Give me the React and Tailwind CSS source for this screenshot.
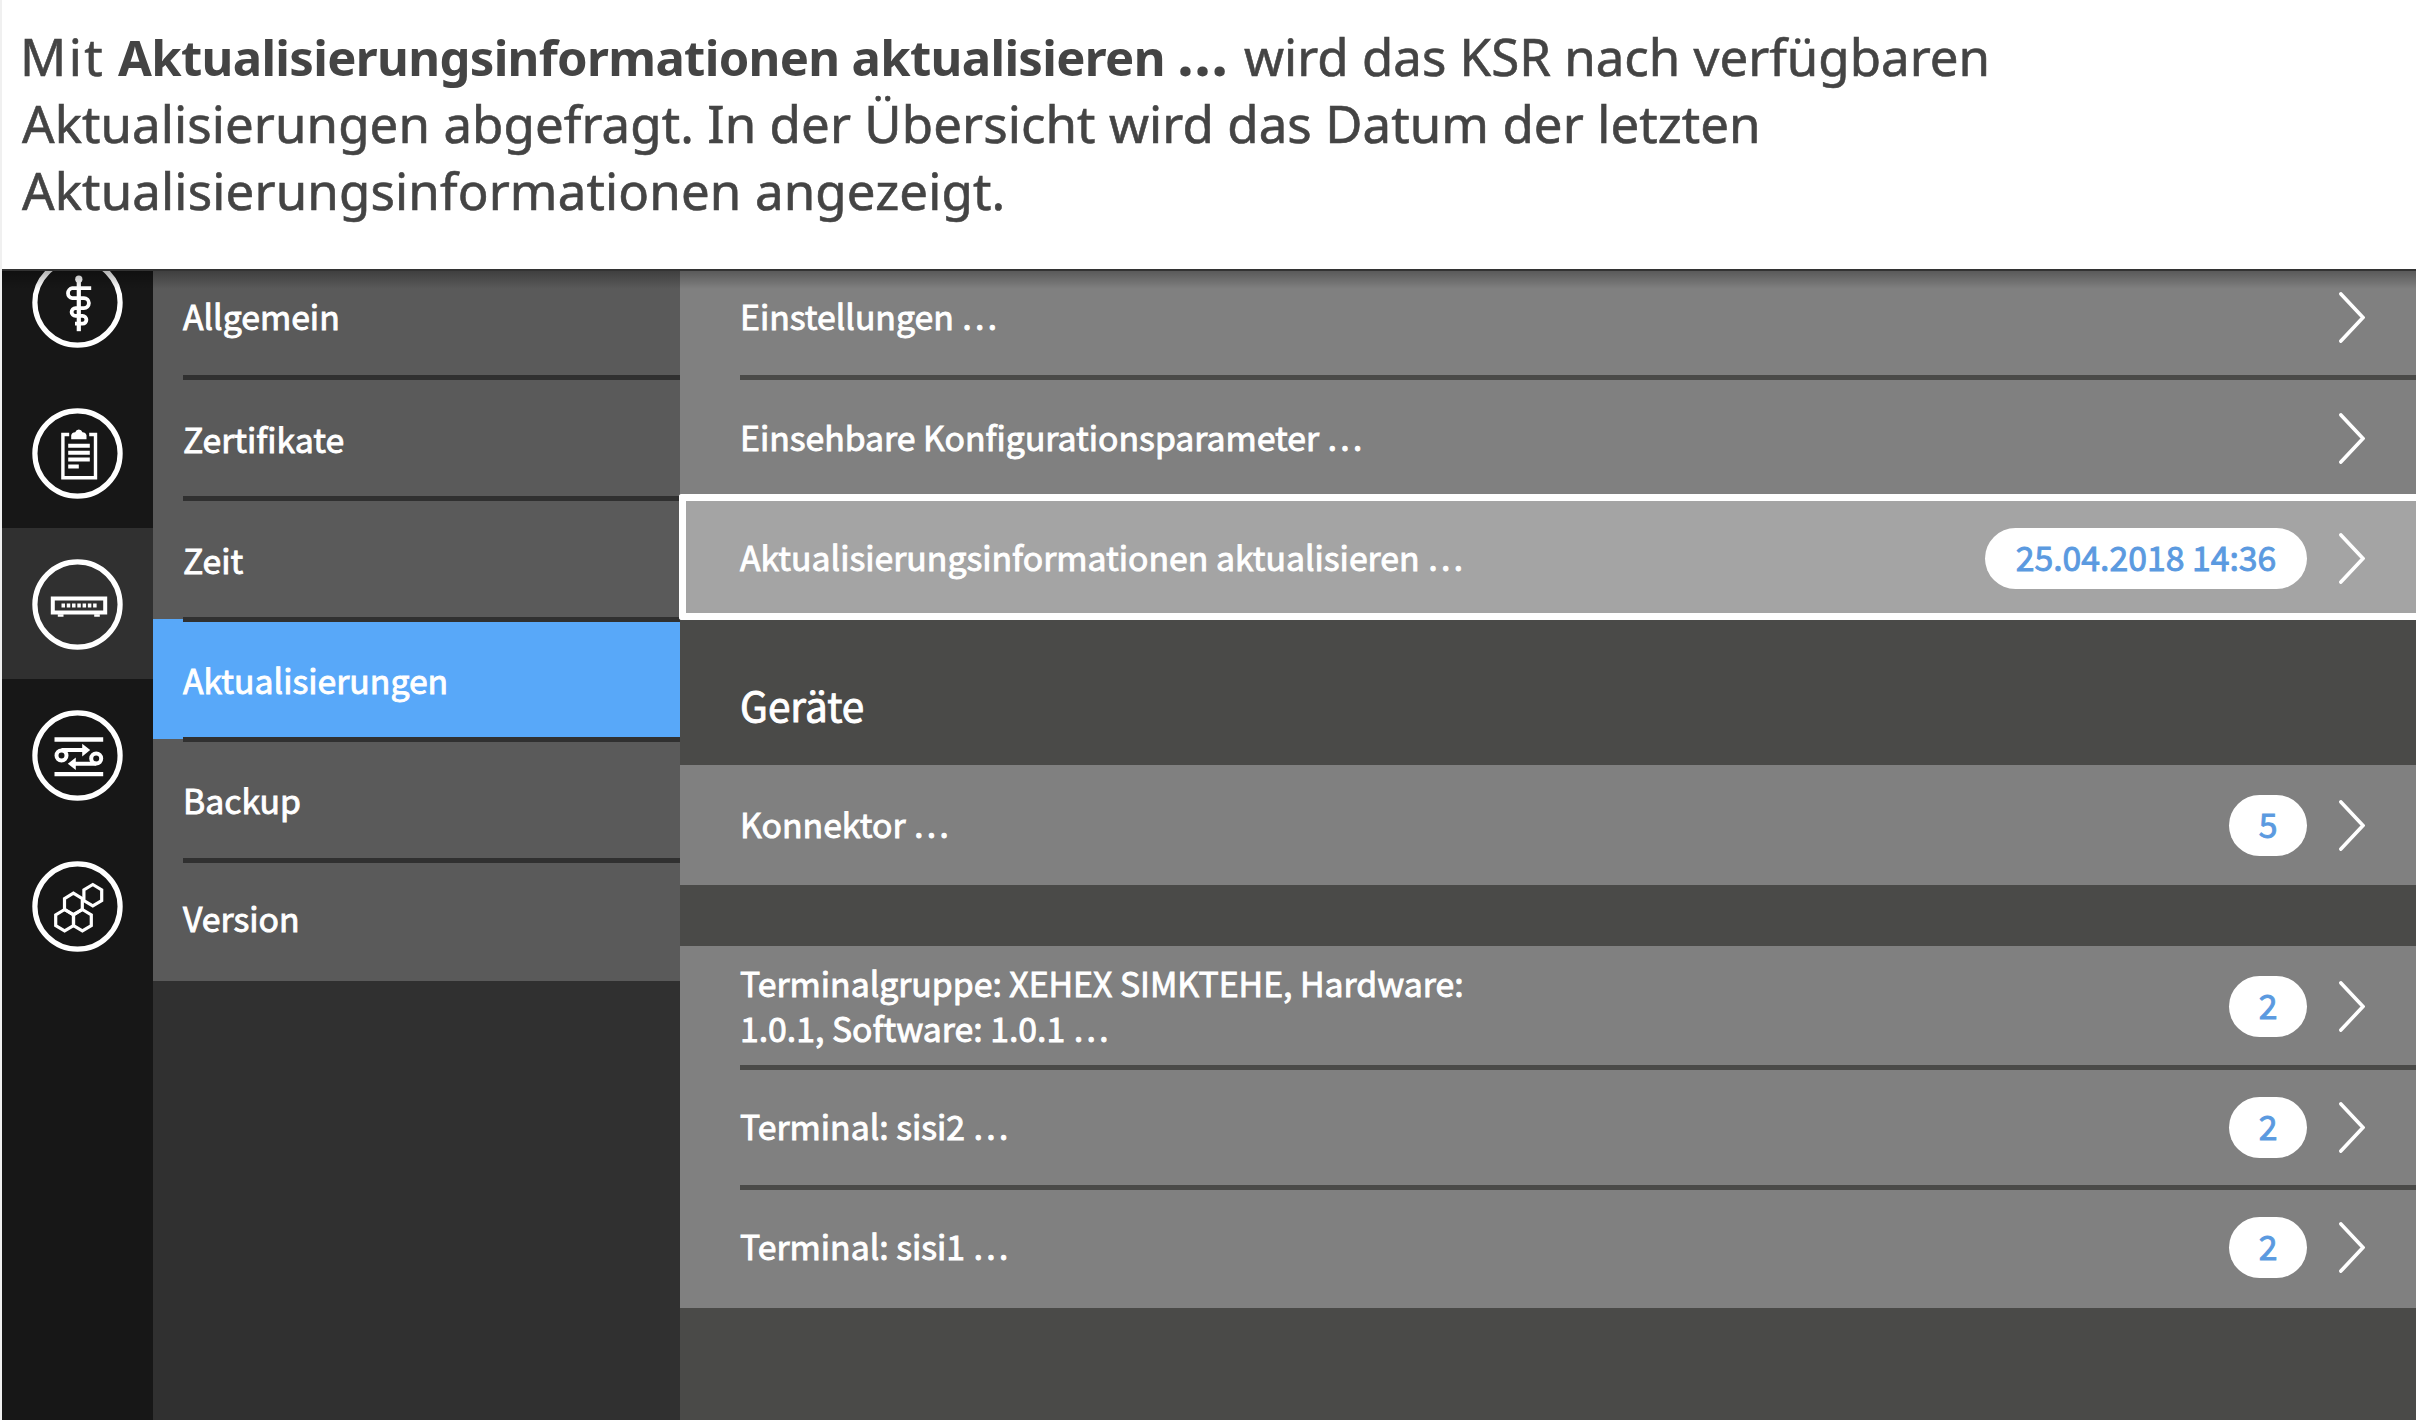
import React from "react";

const LINE = { fill: "none", stroke: "white" };

function RodIcon() {
  return (
    <g {...LINE} strokeWidth="3.8">
      <circle cx="1.3" cy="-23.3" r="3.6" fill="white" stroke="none" />
      <path d="M1.3 -24V28.7" strokeWidth="4.2" />
      <path d="M13.7 -14.3H-5.2A5 5 0 0 0 -5.2 -4.4H6.4A5 5 0 0 1 6.4 5.6H-2A3.9 3.9 0 0 0 -2 13.4H5A3.9 3.9 0 0 1 5 21.2H-2.5" />
    </g>
  );
}

function ClipboardIcon() {
  return (
    <g {...LINE} strokeWidth="3.4">
      <path d="M-8.3 -19H-14.6V24.3H18V-19H11.7" />
      <path d="M-6.3 -14.2V-18.3Q-5.6 -21.3 -2.3 -21.3Q-1.3 -24 1.3 -24Q4 -24 5 -21.3Q8.2 -21.3 9 -18.3V-14.2Z" fill="white" stroke="none" />
      <path d="M-9.3 -7.7H12.3M-9.3 -.8H12.3M-9.3 6.1H12.3M-9.3 13H1.3" strokeWidth="4" />
    </g>
  );
}

function ConnectorIcon() {
  return (
    <g {...LINE} strokeWidth="4">
      <rect x="-24.7" y="-6" width="52.4" height="14" />
      <path d="M-16 1H19.2" strokeWidth="4.2" strokeDasharray="3.5 1.77" />
      <path d="M-19.7 11H-14M16.7 11H22.3" strokeWidth="2.6" />
    </g>
  );
}

function ExchangeIcon() {
  return (
    <g {...LINE} strokeWidth="4">
      <path d="M-23 -16H25.7M-23 18.7H25.7" strokeWidth="4.3" />
      <circle cx="-16" cy="0" r="5" />
      <circle cx="18.7" cy="3" r="5" />
      <path d="M-16 -5.4H6M18.7 8.3H-3" />
      <path d="M4.7 -11.8L12.7 -5.4L4.7 1ZM-1.7 2L-9.7 8.3L-1.7 14.6Z" fill="white" stroke="none" />
    </g>
  );
}

function HexIcon() {
  const hex = "m0 -10.7l8.9 5.35v10.7l-8.9 5.35l-8.9 -5.35v-10.7z";
  return (
    <g {...LINE} strokeWidth="3.2">
      <path d={"M15.3 -11.3" + hex} />
      <path d={"M-4.1 -2.6" + hex} />
      <path d={"M-12.9 13.7" + hex} />
      <path d={"M4.9 13.7" + hex} />
    </g>
  );
}

function RailItem({ children, className }) {
  return (
    <div className={`flex shrink-0 justify-center ${className}`}>
      <svg className="h-[91px] w-[91px] shrink-0" viewBox="-45.5 -45.5 91 91">
        <circle r="42.6" fill="none" stroke="white" strokeWidth="5.2" />
        {children}
      </svg>
    </div>
  );
}

function MenuItem({ label, className, last }) {
  return (
    <div className={`relative flex shrink-0 items-center pl-[30px] ${className}`}>
      <span>{label}</span>
      {!last && <div className="absolute right-0 -bottom-[3px] left-[30px] z-10 h-[5px] bg-[#303030]" />}
    </div>
  );
}

function Row({ label, value, className, divider }) {
  const pillSize = value && value.length > 1 ? "w-[322px]" : "w-[78px]";
  return (
    <div className={`relative flex shrink-0 items-center pr-[51px] ${className}`}>
      <span className="max-w-[760px] pb-[3px] leading-[45.5px]">{label}</span>
      <span className="flex-1" />
      {value && (
        <span className={`mr-[32px] flex h-[61px] items-center justify-center rounded-full bg-white pb-[2px] text-[#5b9ae0] ${pillSize}`}>
          {value}
        </span>
      )}
      <svg className="h-[51px] w-[26px] shrink-0" viewBox="0 0 26 51">
        <path d="M1.9 1.9L24 25.5L1.9 49.1" fill="none" stroke="white" strokeWidth="3.6" strokeLinecap="round" />
      </svg>
      {divider && <div className="absolute right-0 -bottom-[3px] left-[60px] z-10 h-[5px] bg-[#4a4a48]" />}
    </div>
  );
}

export default function App() {
  return (
    <div className="flex h-[1420px] w-[2416px] overflow-hidden bg-white">
      <div className="w-[2px] shrink-0 bg-[#f0f0f0]" />
      <div className="flex min-w-0 flex-1 flex-col">
        <div className="h-[271px] shrink-0 border-b-2 border-[#333333] pt-[23px] pl-5 font-['Noto_Sans',sans-serif] text-[51px] leading-[67px] whitespace-nowrap text-[#444444] [-webkit-text-stroke:0.6px_currentColor]">
          <div className="flex h-[67px]">
            <span className="-ml-[2px] w-[98px] tracking-[2.4px]">Mit</span>
            <strong className="w-[1126px] text-[49px] font-bold tracking-[-0.67px] [-webkit-text-stroke:0px]">
              Aktualisierungsinformationen aktualisieren <span className="text-[60px] leading-none">…</span>
            </strong>
            <span>wird das KSR nach verfügbaren</span>
          </div>
          <div className="tracking-[0.08px]">Aktualisierungen abgefragt. In der Übersicht wird das Datum der letzten</div>
          <div className="tracking-[0.14px]">Aktualisierungsinformationen angezeigt.</div>
        </div>

        <div className="relative flex min-h-0 flex-1 font-['Noto_Sans_CJK_SC',sans-serif] text-[33.75px] text-white [-webkit-text-stroke:0.9px_currentColor]">
          <nav className="flex w-[151px] shrink-0 flex-col bg-[#171717]">
            <RailItem className="h-[106px] items-end overflow-hidden pb-[29px]"><RodIcon /></RailItem>
            <RailItem className="h-[151px] items-center pt-px"><ClipboardIcon /></RailItem>
            <RailItem className="h-[151px] items-center bg-[#303030] pt-px"><ConnectorIcon /></RailItem>
            <RailItem className="h-[151px] items-center pt-px"><ExchangeIcon /></RailItem>
            <RailItem className="h-[151px] items-center pt-px"><HexIcon /></RailItem>
          </nav>

          <aside className="flex w-[527px] shrink-0 flex-col bg-[#303030]">
            <MenuItem label="Allgemein" className="h-[106px] bg-[#5a5a5a] pb-[16px]" />
            <MenuItem label="Zertifikate" className="h-[121px] bg-[#5a5a5a] pt-[3px]" />
            <MenuItem label="Zeit" className="h-[121px] bg-[#5a5a5a] pt-[3px]" />
            <MenuItem label="Aktualisierungen" className="h-[120px] bg-[#58a8f9] pt-[2px]" />
            <MenuItem label="Backup" className="h-[121px] bg-[#5a5a5a] pt-[2px]" />
            <MenuItem label="Version" className="h-[121px] bg-[#5a5a5a] pb-[4px]" last />
          </aside>

          <main className="flex min-w-0 flex-1 flex-col bg-[#4a4a48]">
            <Row label="Einstellungen …" className="h-[106px] bg-[#808080] pb-[14px] pl-[60px]" divider />
            <Row label="Einsehbare Konfigurationsparameter …" className="h-[117px] bg-[#808080] pt-[5px] pl-[60px]" />
            <Row
              label="Aktualisierungsinformationen aktualisieren …"
              value="25.04.2018 14:36"
              className="z-20 -ml-px h-[126px] rounded-l-[3px] border-7 border-r-0 border-white bg-[#a4a4a4] pt-[3px] pl-[54px]"
            />
            <div className="flex h-[145px] shrink-0 items-center pt-[25px] pl-[60px] text-[40.5px]">Geräte</div>
            <Row label="Konnektor …" value="5" className="h-[120px] bg-[#808080] pl-[60px]" />
            <div className="h-[61px] shrink-0" />
            <Row
              label="Terminalgruppe: XEHEX SIMKTEHE, Hardware: 1.0.1, Software: 1.0.1 …"
              value="2"
              className="h-[121px] bg-[#808080] pl-[60px]"
              divider
            />
            <Row label="Terminal: sisi2 …" value="2" className="h-[120px] bg-[#808080] pl-[60px]" divider />
            <Row label="Terminal: sisi1 …" value="2" className="h-[121px] bg-[#808080] pl-[60px]" />
          </main>

          <div className="pointer-events-none absolute inset-x-0 top-0 z-30 h-[18px] bg-linear-to-b from-black/30 to-transparent" />
        </div>
      </div>
    </div>
  );
}
